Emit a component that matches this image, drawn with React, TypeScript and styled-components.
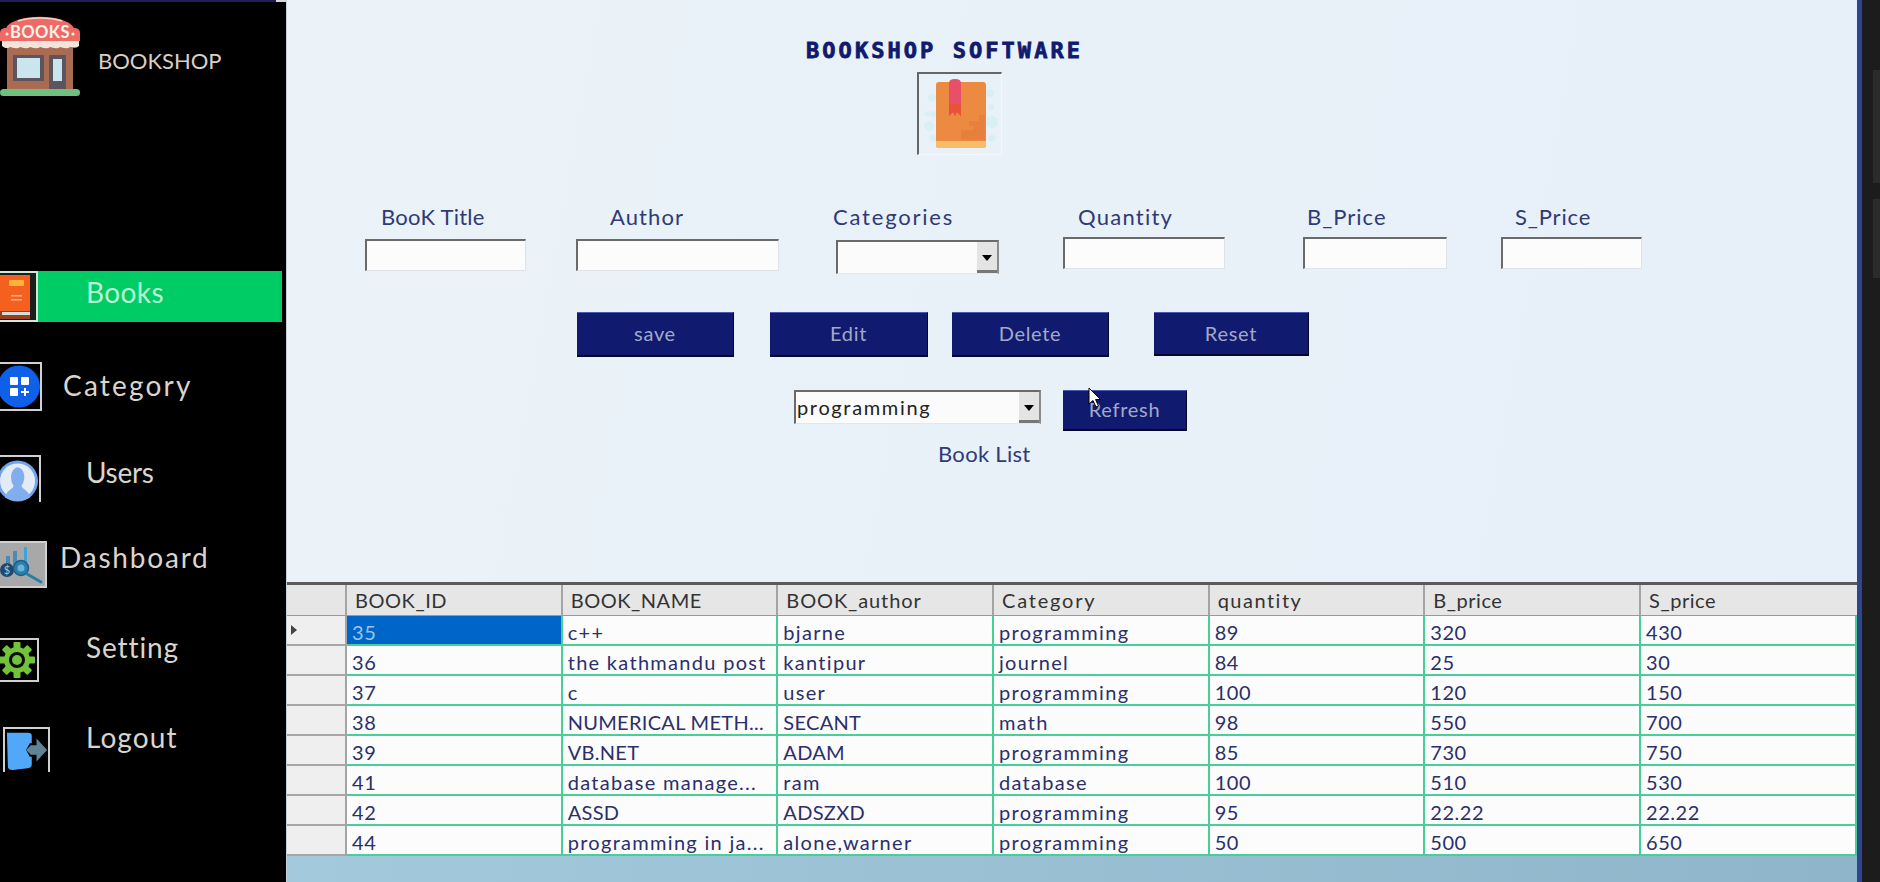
import React from "react";
import styled, { createGlobalStyle } from "styled-components";

const FONT = `Lato, "Open Sans", sans-serif`;

const GlobalStyle = createGlobalStyle`
  html, body {
    margin: 0;
    padding: 0;
    background: #000;
    overflow: hidden;
  }
  * {
    box-sizing: border-box;
  }
`;

type NavEntry = {
  label: string;
  icon: React.ReactNode;
  top: number;
  boxW: number;
  boxH: number;
  boxLeft: number;
  textLeft: number;
  textTop: number;
  spacing: number;
  noBottom?: boolean;
};

const ShopLogo = () => (
  <svg width="80" height="80" viewBox="0 0 80 80">
    <rect x="7" y="30" width="66" height="44" fill="#a96b52" />
    <rect x="13" y="39" width="31" height="26" fill="#5c5560" />
    <rect x="17" y="42" width="23" height="20" fill="#c9e6ee" />
    <rect x="49" y="39" width="17" height="35" fill="#5c5560" />
    <rect x="53" y="43" width="9" height="22" fill="#c9e6ee" />
    <rect x="0" y="73" width="80" height="7" rx="3.5" fill="#6fbf7e" />
    <path d="M0 17 Q0 12 6 12 C14 -3 66 -3 74 12 Q80 12 80 17 V25 H0 Z" fill="#ee6a66" />
    <path d="M18 5 C30 1 50 1 62 5" fill="none" stroke="#f8d2cc" strokeWidth="1.4" />
    <path d="M2 25 H79 V30 C76 33 72 31 70 31 C66 34 62 31 60 31 C56 34 52 31 50 31 C46 34 42 31 40 31 C36 34 32 31 30 31 C26 34 22 31 20 31 C16 34 12 31 10 31 C8 33 4 32 2 30 Z" fill="#f1e4d8" />
    <text x="40" y="21.5" textAnchor="middle" fontFamily="Lato, sans-serif" fontWeight="700" fontSize="16.5" letterSpacing="0.4" fill="#fff3ea">BOOKS</text>
    <circle cx="7" cy="18" r="1.6" fill="#fff3ea" />
    <circle cx="73" cy="18" r="1.6" fill="#fff3ea" />
  </svg>
);

const HeroBook = () => (
  <svg width="82" height="81" viewBox="0 0 82 81">
    <g fill="#d8eff4">
      <circle cx="13" cy="24" r="4" />
      <circle cx="71" cy="19" r="4" />
      <circle cx="8" cy="40" r="2.5" />
      <circle cx="14" cy="40" r="3" />
      <circle cx="72" cy="33" r="3" />
      <circle cx="10" cy="52" r="5" />
      <circle cx="73" cy="48" r="6" />
      <circle cx="14" cy="64" r="3.5" />
      <circle cx="73" cy="64" r="3.5" />
    </g>
    <path d="M17 11 Q17 8 20 8 H64 Q67 8 67 11 V71 Q67 74 64 74 H20 Q17 74 17 71 Z" fill="#ec8a42" />
    <path d="M17 67 H67 V71 Q67 74 64 74 H20 Q17 74 17 71 Z" fill="#f6bc6a" />
    <path d="M30 9 Q30 5 36 5 Q42 5 42 9 V42 L38 38 L36 42 L34 38 L30 42 Z" fill="#e8506a" />
    <path d="M30 30 H42 V42 L38 38 L36 42 L34 38 L30 42 Z" fill="#ea5238" />
    <path d="M42 60 V56 H54 V52 H50 V47 H60 V41 H66 V66 H42 Z" fill="#e67d3c" opacity="0.8" />
  </svg>
);

const NavBook = () => (
  <svg width="36" height="48" viewBox="0 0 36 48">
    <path d="M0 2 H30 V44 H0 Z" fill="#f4611f" />
    <rect x="9" y="7" width="15" height="6" rx="1" fill="#fbb23c" />
    <rect x="11" y="22" width="11" height="1.6" fill="#f9a987" />
    <rect x="11" y="26" width="11" height="1.6" fill="#f9a987" />
    <path d="M0 38 H30 V46 H0 Z" fill="#9a3f1c" />
    <rect x="2" y="39" width="28" height="3" fill="#d8dcdf" />
  </svg>
);

const CategoryIcon = () => (
  <svg width="40" height="45" viewBox="0 0 40 45">
    <circle cx="19" cy="22.5" r="21" fill="#0f5fe8" />
    <rect x="10" y="13" width="8" height="8" rx="1" fill="#fff" />
    <rect x="21" y="13" width="8" height="8" rx="1" fill="#fff" />
    <rect x="10" y="24" width="8" height="8" rx="1" fill="#fff" />
    <path d="M25 24 v8 M21 28 h8" stroke="#fff" strokeWidth="2" />
  </svg>
);

const UserIcon = () => (
  <svg width="40" height="46" viewBox="0 0 40 46">
    <circle cx="18" cy="24" r="21" fill="#6ea2ec" />
    <circle cx="18" cy="24" r="18" fill="#e3ebf6" />
    <path d="M5 41 C7 33 13 33 14 29 C10 24 10 12 18 10 C27 12 26 24 22 29 C23 33 29 33 31 41 Q18 48 5 41 Z" fill="#82aeee" />
  </svg>
);

const DashIcon = () => (
  <svg width="45" height="43" viewBox="0 0 45 43">
    <rect width="45" height="43" fill="#a8a8a8" />
    <rect x="6" y="13" width="4" height="10" fill="#4d89b6" />
    <rect x="13" y="8" width="4" height="14" fill="#4d89b6" />
    <rect x="24" y="4" width="3" height="16" fill="#3ea3d8" />
    <circle cx="7" cy="27" r="7" fill="#20486e" />
    <text x="7" y="31" textAnchor="middle" fontSize="11" fontFamily="Lato, sans-serif" fill="#a8c4da">$</text>
    <circle cx="21" cy="25" r="7.5" fill="#2f7da8" stroke="#1f5f88" strokeWidth="1.5" />
    <circle cx="21" cy="25" r="3.5" fill="#63b7dd" />
    <path d="M27 31 L41 39" stroke="#2a7da8" strokeWidth="3" strokeLinecap="round" />
  </svg>
);

const GearIcon = () => (
  <svg width="36" height="42" viewBox="0 0 36 42">
    <g transform="translate(17 21)" fill="#72c23a">
      {[0, 45, 90, 135, 180, 225, 270, 315].map((a) => (
        <rect key={a} x="-3.5" y="-18" width="7" height="8" rx="1" transform={`rotate(${a})`} />
      ))}
      <circle r="13" />
      <circle r="8" fill="#0b0b0b" />
      <circle r="5" fill="#72c23a" />
    </g>
  </svg>
);

const LogoutIcon = () => (
  <svg width="45" height="43" viewBox="0 0 45 43">
    <path d="M2 3 H24 Q28 3 28 6 V14 H26 L22 21 L26 28 H28 V36 Q28 40 24 40 L8 42 Q3 42 3 38 Z" fill="#52a8f8" />
    <path d="M22 21 L27 16 H33 V9 L44 21 L33 33 V26 H27 Z" fill="#5f8496" />
  </svg>
);

const NAV: NavEntry[] = [
  { label: "Books", icon: <NavBook />, top: 0, boxW: 38, boxH: 51, boxLeft: 0, textLeft: 48, textTop: 2, spacing: 0.4 },
  { label: "Category", icon: <CategoryIcon />, top: 40, boxW: 42, boxH: 49, boxLeft: 0, textLeft: 21, textTop: 4, spacing: 2.2 },
  { label: "Users", icon: <UserIcon />, top: 44, boxW: 41, boxH: 47, boxLeft: 0, textLeft: 45, textTop: -2, spacing: -0.3, noBottom: true },
  { label: "Dashboard", icon: <DashIcon />, top: 39, boxW: 47, boxH: 47, boxLeft: 0, textLeft: 13, textTop: -3, spacing: 1.8 },
  { label: "Setting", icon: <GearIcon />, top: 50, boxW: 39, boxH: 44, boxLeft: 0, textLeft: 47, textTop: -10, spacing: 0.9 },
  { label: "Logout", icon: <LogoutIcon />, top: 45, boxW: 47, boxH: 45, boxLeft: 3, textLeft: 36, textTop: -9, spacing: 1.1, noBottom: true },
];

type Book = {
  id: number;
  name: string;
  author: string;
  category: string;
  qty: number;
  buy: string;
  sell: string;
};

const BOOKS: Book[] = [
  { id: 35, name: "c++", author: "bjarne", category: "programming", qty: 89, buy: "320", sell: "430" },
  { id: 36, name: "the kathmandu post", author: "kantipur", category: "journel", qty: 84, buy: "25", sell: "30" },
  { id: 37, name: "c", author: "user", category: "programming", qty: 100, buy: "120", sell: "150" },
  { id: 38, name: "NUMERICAL METH...", author: "SECANT", category: "math", qty: 98, buy: "550", sell: "700" },
  { id: 39, name: "VB.NET", author: "ADAM", category: "programming", qty: 85, buy: "730", sell: "750" },
  { id: 41, name: "database manage...", author: "ram", category: "database", qty: 100, buy: "510", sell: "530" },
  { id: 42, name: "ASSD", author: "ADSZXD", category: "programming", qty: 95, buy: "22.22", sell: "22.22" },
  { id: 44, name: "programming in ja...", author: "alone,warner", category: "programming", qty: 50, buy: "500", sell: "650" },
];

const COLUMNS = [
  { title: "BOOK_ID", spacing: 0.55 },
  { title: "BOOK_NAME", spacing: 0.55 },
  { title: "BOOK_author", spacing: 0.9 },
  { title: "Category", spacing: 1.8 },
  { title: "quantity", spacing: 1.5 },
  { title: "B_price", spacing: 0.55 },
  { title: "S_price", spacing: 0.55 },
];

// Century Gothic runs wide on lowercase, narrow on capitals
const textSpacing = (value: string) => (/[a-z]/.test(value) ? 1.3 : 0.3);

const App = () => {
  return (
    <Page>
      <GlobalStyle />
      <Sidebar>
        <TopStrip />
        <Brand>
          <ShopLogo />
          <BrandName>BOOKSHOP</BrandName>
        </Brand>
        <NavList>
          {NAV.map((item, i) => (
            <NavItem key={item.label} $active={i === 0} $top={item.top}>
              <NavIconBox
                $w={item.boxW}
                $h={item.boxH}
                $left={item.boxLeft}
                $active={i === 0}
                $noBottom={item.noBottom}
              >
                {item.icon}
              </NavIconBox>
              <NavLabel $left={item.textLeft} $top={item.textTop} $spacing={item.spacing} $active={i === 0}>
                {item.label}
              </NavLabel>
            </NavItem>
          ))}
        </NavList>
      </Sidebar>

      <Main>
        <FormArea>
          <Title>BOOKSHOP SOFTWARE</Title>
          <HeroBox>
            <HeroBook />
          </HeroBox>

          <FieldRow>
            <Field $gap={0} $w={161}>
              <FieldLabel $indent={16} $spacing={0.25}>BooK Title</FieldLabel>
              <TextBox />
            </Field>
            <Field $gap={50} $w={203}>
              <FieldLabel $indent={34} $spacing={1.1}>Author</FieldLabel>
              <TextBox />
            </Field>
            <Field $gap={57} $w={163}>
              <FieldLabel $indent={-3} $spacing={1.8}>Categories</FieldLabel>
              <Combo $h={34} $drop={2}>
                <ComboArrow />
              </Combo>
            </Field>
            <Field $gap={64} $w={162}>
              <FieldLabel $indent={15} $spacing={1.25}>Quantity</FieldLabel>
              <TextBox $drop={-1} />
            </Field>
            <Field $gap={78} $w={144}>
              <FieldLabel $indent={4} $spacing={1}>B_Price</FieldLabel>
              <TextBox $drop={-1} />
            </Field>
            <Field $gap={54} $w={141}>
              <FieldLabel $indent={14} $spacing={0.85}>S_Price</FieldLabel>
              <TextBox $drop={-1} />
            </Field>
          </FieldRow>

          <ButtonRow>
            <ActionButton $w={157}>save</ActionButton>
            <ActionButton $w={158} $gap={36}>Edit</ActionButton>
            <ActionButton $w={157} $gap={24}>Delete</ActionButton>
            <ActionButton $w={155} $h={44} $gap={45}>Reset</ActionButton>
          </ButtonRow>

          <FilterRow>
            <Combo $h={34} $w={247}>
              <ComboText>programming</ComboText>
              <ComboArrow />
            </Combo>
            <RefreshHold>
              <ActionButton $w={124} $h={41}>Refresh</ActionButton>
              <Cursor width="14" height="22" viewBox="0 0 14 22">
                <path d="M1 1 L1 17 L5 13.5 L8 20 L10.5 19 L7.6 12.6 L12.5 12.5 Z" fill="#fff" stroke="#000" strokeWidth="1" />
              </Cursor>
            </RefreshHold>
          </FilterRow>

          <ListTitle>Book List</ListTitle>
        </FormArea>

        <Grid>
          <thead>
            <tr>
              <CornerCell />
              {COLUMNS.map((c) => (
                <HeadCell key={c.title} $spacing={c.spacing}>{c.title}</HeadCell>
              ))}
            </tr>
          </thead>
          <tbody>
            {BOOKS.map((b, i) => (
              <tr key={b.id}>
                <RowHead>{i === 0 && <RowMarker />}</RowHead>
                <Cell $selected={i === 0}>{b.id}</Cell>
                <Cell $spacing={textSpacing(b.name)}>{b.name}</Cell>
                <Cell $spacing={textSpacing(b.author)}>{b.author}</Cell>
                <Cell $spacing={textSpacing(b.category)}>{b.category}</Cell>
                <Cell>{b.qty}</Cell>
                <Cell>{b.buy}</Cell>
                <Cell>{b.sell}</Cell>
              </tr>
            ))}
          </tbody>
        </Grid>
        <GridFooter />
      </Main>

      <Rail>
        <RailPanel $h={113} />
        <RailPanel $h={79} />
      </Rail>
    </Page>
  );
};

export default App;

const Page = styled.div`
  width: 1880px;
  height: 882px;
  display: flex;
  overflow: hidden;
  font-family: ${FONT};
`;

const Sidebar = styled.aside`
  width: 287px;
  flex-shrink: 0;
  background: #000;
  border-right: 1px solid #c8d0da;
  display: flex;
  flex-direction: column;
`;

const TopStrip = styled.div`
  height: 2px;
  background: linear-gradient(90deg, #1c1f5e 276px, #d8d8d8 276px);
`;

const Brand = styled.div`
  height: 80px;
  margin-top: 14px;
  display: flex;
  align-items: center;
  gap: 18px;
`;

const BrandName = styled.span`
  font-size: 22px;
  color: #d8cfc6;
  position: relative;
  top: 4px;
`;

const NavList = styled.nav`
  margin-top: 175px;
  display: flex;
  flex-direction: column;
`;

const NavItem = styled.div<{ $active?: boolean; $top: number }>`
  width: 282px;
  margin-top: ${(p) => p.$top}px;
  display: flex;
  align-items: flex-start;
  background: ${(p) => (p.$active ? "#00cc66" : "transparent")};
`;

const NavIconBox = styled.div<{ $w: number; $h: number; $left: number; $active?: boolean; $noBottom?: boolean }>`
  width: ${(p) => p.$w}px;
  height: ${(p) => p.$h}px;
  margin-left: ${(p) => p.$left}px;
  flex-shrink: 0;
  background: ${(p) => (p.$active ? "#1d1d1d" : "#000")};
  border: 2px solid ${(p) => (p.$active ? "#cfe8dc" : "#d0d0d0")};
  border-left: ${(p) => (p.$left ? "2px solid #d0d0d0" : "none")};
  border-bottom: ${(p) => (p.$noBottom ? "none" : "")};
  display: flex;
  align-items: center;
  overflow: hidden;
`;

const NavLabel = styled.span<{ $left: number; $top: number; $spacing: number; $active?: boolean }>`
  margin-left: ${(p) => p.$left}px;
  margin-top: ${(p) => p.$top}px;
  font-size: 28px;
  line-height: 38px;
  letter-spacing: ${(p) => p.$spacing}px;
  color: ${(p) => (p.$active ? "#b8f5d4" : "#d9d5cc")};
`;

const Main = styled.main`
  width: 1570px;
  flex-shrink: 0;
  display: flex;
  flex-direction: column;
  background: #e8f0f8;
`;

const FormArea = styled.section`
  height: 582px;
  flex-shrink: 0;
  padding-top: 43px;
  display: flex;
  flex-direction: column;
  align-items: flex-start;
  background: linear-gradient(100deg, #ebf3f9 0%, #e8f0f8 60%, #e7eff8 100%);
`;

const Title = styled.h1`
  margin: 0 0 0 519px;
  font-family: "DejaVu Sans Mono", monospace;
  font-weight: 700;
  font-size: 22px;
  line-height: 16px;
  letter-spacing: 3.05px;
  white-space: nowrap;
  color: #101a6e;
  -webkit-text-stroke: 0.8px #101a6e;
`;

const HeroBox = styled.div`
  width: 85px;
  height: 83px;
  margin: 13px 0 0 630px;
  border-top: 2px solid #666;
  border-left: 2px solid #666;
  border-right: 1px solid #f4f7fb;
  border-bottom: 1px solid #f4f7fb;
`;

const FieldRow = styled.div`
  height: 70px;
  margin: 49px 0 0 78px;
  display: flex;
  align-items: flex-start;
`;

const Field = styled.div<{ $gap: number; $w: number }>`
  width: ${(p) => p.$w}px;
  margin-left: ${(p) => p.$gap}px;
`;

const FieldLabel = styled.div<{ $indent: number; $spacing: number }>`
  height: 34px;
  margin-left: ${(p) => p.$indent}px;
  font-size: 22px;
  line-height: 26px;
  letter-spacing: ${(p) => p.$spacing}px;
  white-space: nowrap;
  color: #2f3a78;
`;

const TextBox = styled.div<{ $drop?: number }>`
  height: 32px;
  margin-top: ${(p) => p.$drop ?? 1}px;
  background: #fcfcfc;
  border-top: 2px solid #6a6a6a;
  border-left: 2px solid #6a6a6a;
  border-right: 1px solid #dfe3e8;
  border-bottom: 1px solid #dfe3e8;
`;

const Combo = styled.div<{ $h: number; $w?: number; $drop?: number }>`
  position: relative;
  width: ${(p) => (p.$w ? `${p.$w}px` : "100%")};
  height: ${(p) => p.$h}px;
  margin-top: ${(p) => p.$drop ?? 0}px;
  background: #fbfbfb;
  border-top: 2px solid #6a6a6a;
  border-left: 2px solid #6a6a6a;
  border-right: 2px solid #8a8a8a;
  border-bottom: 1px solid #e4e6ea;
  display: flex;
  align-items: center;
`;

const ComboText = styled.span`
  padding: 0 0 2px 1px;
  font-size: 20px;
  letter-spacing: 1.65px;
  color: #222;
`;

const ComboArrow = styled.div`
  position: absolute;
  top: 0;
  right: 0;
  bottom: 0;
  width: 20px;
  background: #e4e4e4;
  border-bottom: 3px solid #777;

  &::after {
    content: "";
    position: absolute;
    left: 5px;
    top: 13px;
    border-left: 5px solid transparent;
    border-right: 5px solid transparent;
    border-top: 6px solid #000;
  }
`;

const ButtonRow = styled.div`
  margin: 38px 0 0 290px;
  display: flex;
  align-items: flex-start;
`;

const ActionButton = styled.button<{ $w: number; $h?: number; $gap?: number }>`
  width: ${(p) => p.$w}px;
  height: ${(p) => p.$h ?? 45}px;
  margin-left: ${(p) => p.$gap ?? 0}px;
  padding: 0 0 2px;
  background: #101a6e;
  border: none;
  border-top: 1px solid #4a57b4;
  border-right: 1px solid #04062a;
  border-bottom: 2px solid #04062a;
  font-family: ${FONT};
  font-size: 20px;
  letter-spacing: 0.7px;
  color: #a4a8c8;
`;

const FilterRow = styled.div`
  margin: 33px 0 0 507px;
  display: flex;
  align-items: flex-start;
  gap: 22px;
`;

const RefreshHold = styled.div`
  position: relative;
`;

const Cursor = styled.svg`
  position: absolute;
  left: 25px;
  top: -3px;
`;

const ListTitle = styled.div`
  margin: 10px 0 0 651px;
  font-size: 22px;
  line-height: 26px;
  letter-spacing: 0.3px;
  color: #2f3a78;
`;

const Grid = styled.table`
  width: 1570px;
  height: 274px;
  flex-shrink: 0;
  table-layout: fixed;
  border-collapse: separate;
  border-spacing: 0;
  border-top: 3px solid #5a5a5a;
  background: #fcfcfc;
  font-size: 20px;
`;

const CornerCell = styled.th`
  width: 60px;
  height: 31px;
  padding: 0;
  background: #e6e6e6;
  border-bottom: 1px solid #9a9a9a;
  border-right: 2px solid #a4a4a4;
`;

const HeadCell = styled.th<{ $spacing: number }>`
  padding: 0 0 0 8px;
  background: #e6e6e6;
  border-bottom: 1px solid #9a9a9a;
  border-right: 2px solid #a4a4a4;
  text-align: left;
  font-weight: 400;
  letter-spacing: ${(p) => p.$spacing}px;
  color: #333;

  &:last-child {
    width: 216px;
    border-right: none;
  }
`;

const RowHead = styled.td`
  position: relative;
  height: 30px;
  padding: 0;
  background: #efefef;
  border-bottom: 2px solid #a6a6a6;
  border-right: 2px solid #a4a4a4;
`;

const RowMarker = styled.div`
  position: absolute;
  left: 4px;
  top: 9px;
  border-top: 5px solid transparent;
  border-bottom: 5px solid transparent;
  border-left: 6px solid #444;
`;

const Cell = styled.td<{ $selected?: boolean; $spacing?: number }>`
  padding: 3px 0 0 5px;
  white-space: nowrap;
  overflow: hidden;
  background: ${(p) => (p.$selected ? "#0065c8" : "#fcfcfc")};
  border-right: 2px solid #46cf98;
  border-bottom: 2px solid #46cf98;
  letter-spacing: ${(p) => p.$spacing ?? 0.55}px;
  color: ${(p) => (p.$selected ? "#9cc4e8" : "#2b2f6b")};
`;

const GridFooter = styled.div`
  flex: 1;
  background: linear-gradient(90deg, #a3c9dc 0%, #8fb5ca 100%);
`;

const Rail = styled.div`
  flex: 1;
  padding: 70px 0 0 11px;
  background: #1c1c1c;
  border-left: 5px solid #2f4590;
  display: flex;
  flex-direction: column;
  gap: 16px;
`;

const RailPanel = styled.div<{ $h: number }>`
  height: ${(p) => p.$h}px;
  background: #2b2b2b;
`;
